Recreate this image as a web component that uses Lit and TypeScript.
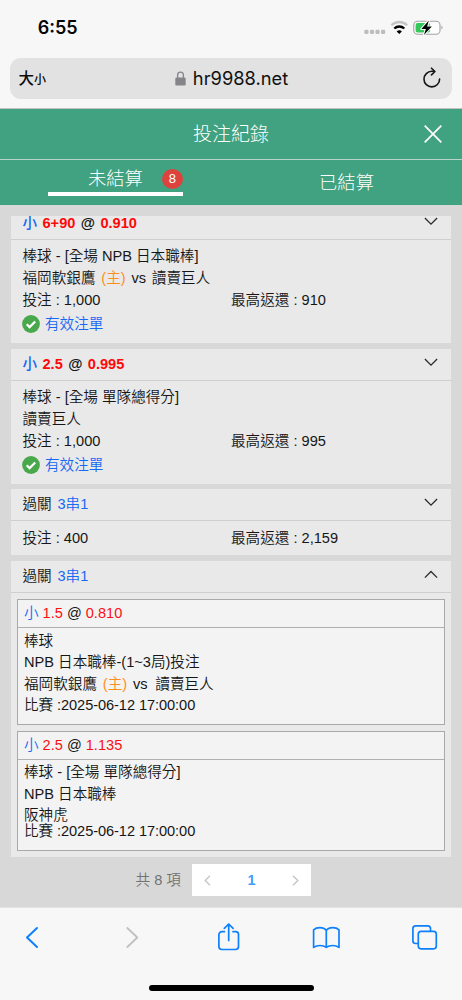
import { LitElement, html, css, svg, nothing } from "lit";
import { customElement, property } from "lit/decorators.js";

type Tone = "blue" | "red" | "orange" | "plain";
interface Part { text: string; tone?: Tone; }
interface Leg { pick: string; line: string; odds: string; rows: Part[][]; tight?: boolean; }
interface Bet {
  kind: "single" | "parlay";
  head: Part[];
  rows?: Part[][];
  stake?: string;
  payout?: string;
  valid?: boolean;
  open?: boolean;
  legs?: Leg[];
}

const match: Part[] = [
  { text: "福岡軟銀鷹" }, { text: "(主)", tone: "orange" }, { text: "vs" }, { text: "讀賣巨人" },
];

const bets: Bet[] = [
  {
    kind: "single",
    head: [{ text: "小", tone: "blue" }, { text: "6+90", tone: "red" }, { text: "@" }, { text: "0.910", tone: "red" }],
    rows: [[{ text: "棒球 - [全場 NPB 日本職棒]" }], match],
    stake: "1,000", payout: "910", valid: true,
  },
  {
    kind: "single",
    head: [{ text: "小", tone: "blue" }, { text: "2.5", tone: "red" }, { text: "@" }, { text: "0.995", tone: "red" }],
    rows: [[{ text: "棒球 - [全場 單隊總得分]" }], [{ text: "讀賣巨人" }]],
    stake: "1,000", payout: "995", valid: true,
  },
  {
    kind: "parlay",
    head: [{ text: "過關" }, { text: "3串1", tone: "blue" }],
    stake: "400", payout: "2,159",
  },
  {
    kind: "parlay", open: true,
    head: [{ text: "過關" }, { text: "3串1", tone: "blue" }],
    legs: [
      {
        pick: "小", line: "1.5", odds: "0.810",
        rows: [[{ text: "棒球" }], [{ text: "NPB 日本職棒-(1~3局)投注" }], match, [{ text: "比賽 :2025-06-12 17:00:00" }]],
      },
      {
        pick: "小", line: "2.5", odds: "1.135", tight: true,
        rows: [[{ text: "棒球 - [全場 單隊總得分]" }], [{ text: "NPB 日本職棒" }], [{ text: "阪神虎" }], [{ text: "比賽 :2025-06-12 17:00:00" }]],
      },
    ],
  },
];

const parts = (list: Part[]) =>
  list.map((p) => html`<span class="part ${p.tone ?? "plain"}">${p.text}</span>`);

@customElement("status-bar")
class StatusBar extends LitElement {
  static styles = css`
    :host { display: flex; height: 58px; box-sizing: border-box; padding: 17px 17px 0 37.8px; justify-content: space-between; align-items: flex-start; }
    .time { font: 600 18px/22px Inter, sans-serif; color: #050505; }
    .icons { display: block; }
  `;
  render() {
    return html`
      <span class="time">6:55</span>
      <svg class="icons" width="82" height="22" viewBox="363 17 82 22">
        <g fill="#bdbdbd">
          <rect x="364.3" y="29.8" width="4.2" height="4.2" rx="1.3" /><rect x="369.9" y="29.8" width="4.2" height="4.2" rx="1.3" />
          <rect x="375.4" y="29.8" width="4.2" height="4.2" rx="1.3" /><rect x="381" y="29.8" width="4.2" height="4.2" rx="1.3" />
        </g>
        <g fill="none" stroke-width="2.3">
          <path d="M391.4 25.2a11.3 11.3 0 0 1 15.8 0" stroke="#c4c4c4" />
          <path d="M394.3 28.5a7.2 7.2 0 0 1 10 0" stroke="#000" />
        </g>
        <path d="M399.3 34.1l-2.6-2.7a3.8 3.8 0 0 1 5.2 0z" />
        <rect x="413.8" y="21.2" width="26.2" height="13" rx="3.8" fill="#fdfdfd" stroke="#a3a3a3" stroke-width="1.1" />
        <path d="M441.4 25.8v3.6c.8-.3 1.2-1 1.2-1.8s-.4-1.5-1.2-1.8z" fill="#a3a3a3" />
        <rect x="415.6" y="23" width="14.5" height="9.4" rx="2" fill="#34c759" />
        <path d="M428.9 20.4l-7.6 8.5h4.6l-2 6 7.9-8.5h-4.7z" stroke="#fff" stroke-width="2" stroke-linejoin="round" />
        <path d="M428.9 20.4l-7.6 8.5h4.6l-2 6 7.9-8.5h-4.7z" />
      </svg>`;
  }
}

@customElement("address-bar")
class AddressBar extends LitElement {
  static styles = css`
    :host { display: block; height: 51px; padding: 0 10px; border-bottom: 1px solid #c3c3c3; box-sizing: border-box; }
    .field { height: 40.5px; border-radius: 11px; background: #e2e2e3; display: grid; grid-template-columns: 60px 1fr 60px; align-items: center; }
    .size { padding-left: 8.5px; display: flex; align-items: baseline; color: #0b0b0b; font-family: "Noto Sans CJK TC", sans-serif; font-weight: 500; line-height: 20px; }
    .big { font-size: 15.5px; }
    .small { font-size: 12px; }
    .site { display: flex; align-items: center; justify-content: center; gap: 7px; padding-left: 1px; }
    .url { font: 400 18.3px/24px Inter, sans-serif; color: #101010; margin-top: -1px; }
    .reload { justify-self: end; margin-right: 10.5px; margin-top: -1px; }
  `;
  render() {
    return html`
      <div class="field">
        <div class="size"><span class="big">大</span><span class="small">小</span></div>
        <div class="site">
          <svg width="11" height="15" viewBox="0 0 11 15">
            <path d="M2.6 7V4a2.9 2.9 0 0 1 5.8 0v3" fill="none" stroke="#858589" stroke-width="1.3" />
            <rect x=".3" y="6.4" width="10.4" height="8.2" rx="1.4" fill="#858589" />
          </svg>
          <span class="url">hr9988.net</span>
        </div>
        <svg class="reload" width="20" height="22" viewBox="0 0 20 22" fill="none" stroke="#161616" stroke-width="1.6" stroke-linecap="round" stroke-linejoin="round">
          <path d="M17.6 12a7.8 7.8 0 1 1-7.8-7.7h2.4" /><path d="M9.5 1.2l3.4 3.3-3.4 3.4" />
        </svg>
      </div>`;
  }
}

@customElement("record-header")
class RecordHeader extends LitElement {
  static styles = css`
    :host { display: block; background: #40a280; color: #fff; font-family: "Noto Sans CJK TC", sans-serif; font-weight: 300; }
    .title { height: 50px; display: grid; grid-template-columns: 60px 1fr 60px; align-items: center; border-bottom: 1px solid #b9d4c9; }
    .name { grid-column: 2; text-align: center; font-size: 19px; line-height: 28px; margin-top: -2px; }
    .close { justify-self: end; margin-right: 20px; }
    .tabs { height: 45px; display: grid; grid-template-columns: 1fr 1fr; }
    .tab { display: flex; justify-content: center; font-size: 18.3px; line-height: 26px; }
    .active { box-sizing: border-box; width: 135px; height: 32px; margin: 4px 0 0 48px; padding-left: 40px; justify-content: flex-start; gap: 19px; border-bottom: 4px solid #fff; }
    .idle { padding-top: 8px; }
    .badge { width: 21px; height: 20px; margin-top: 5px; border-radius: 50%; background: #dd433c; font: 400 13px/20px "Liberation Sans", sans-serif; text-align: center; }
  `;
  render() {
    return html`
      <div class="title">
        <span class="name">投注紀錄</span>
        <svg class="close" width="18" height="18" viewBox="0 0 18 18" stroke="#fff" stroke-width="1.7"><path d="M.7.7l16.6 16.6M17.3.7L.7 17.3" /></svg>
      </div>
      <div class="tabs">
        <div class="tab active"><span>未結算</span><span class="badge">8</span></div>
        <div class="tab idle">已結算</div>
      </div>`;
  }
}

const textStyles = css`
  .part { white-space: pre; }
  .part + .part { margin-left: 5.8px; }
  .plain { color: #161616; }
  .blue { color: #1768f5; }
  .red { color: #fb1010; }
  .orange { color: #ff8f1c; }
  .row { display: flex; height: 22px; line-height: 22px; }
`;

@customElement("parlay-leg")
class ParlayLeg extends LitElement {
  @property({ attribute: false }) leg!: Leg;
  static styles = [textStyles, css`
    :host { display: block; border: 1px solid #a9a9a9; background: #f3f3f3; }
    .head { height: 27px; display: flex; line-height: 27px; padding-left: 6px; border-bottom: 1px solid #b0b0b0; }
    .head .part + .part { margin-left: 4px; }
    .body { box-sizing: border-box; padding: 3px 0 0 6px; height: 96px; }
    .row { height: 21.4px; line-height: 21.4px; }
    .row .part:nth-child(4) { margin-left: 7.8px; }
    .row:last-child { letter-spacing: -0.07px; }
    .tight { height: 90px; padding-top: 2.4px; }
    .tight .row:last-child { margin-top: -6px; }
  `];
  render() {
    const l = this.leg;
    return html`
      <div class="head">${parts([{ text: l.pick, tone: "blue" }, { text: l.line, tone: "red" }, { text: "@" }, { text: l.odds, tone: "red" }])}</div>
      <div class="body ${l.tight ? "tight" : ""}">${l.rows.map((r) => html`<div class="row">${parts(r)}</div>`)}</div>`;
  }
}

@customElement("bet-card")
class BetCard extends LitElement {
  @property({ attribute: false }) bet!: Bet;
  static styles = [textStyles, css`
    :host { display: block; background: #e9e9e9; }
    .head { height: 31px; line-height: 15px; display: flex; align-items: center; padding: 0 12px 0 11.5px; border-bottom: 1px solid #cfcfcf; }
    .single { font-weight: 700; }
    .single .red { color: #ff0808; }
    .single .blue { font-weight: 500; }
    .single .part + .part { margin-left: 5.4px; }
    .chevron { margin: -4px 1px 0 auto; }
    .body { height: 103px; box-sizing: border-box; padding: 5.5px 12px 0 11.5px; }
    .short { height: 34px; }
    .money { display: grid; grid-template-columns: 208.5px 1fr; }
    .valid { height: 26px; line-height: 26px; gap: 5px; align-items: center; }
    .valid svg { margin-left: -0.5px; }
    .legs { display: flex; flex-direction: column; gap: 6px; padding: 6px; }
  `];
  render() {
    const b = this.bet;
    return html`
      <div class="head ${b.kind}">
        ${parts(b.head)}
        <svg class="chevron" width="14" height="9" viewBox="0 0 14 9" fill="none" stroke="#2a2a2a" stroke-width="1.3">
          ${b.open ? svg`<path d="M.9 7.6L7 1.5l6.1 6.1" />` : svg`<path d="M.9 1L7 7.1 13.1 1" />`}
        </svg>
      </div>
      ${b.stake ? html`
        <div class="body ${b.rows ? "" : "short"}">
          ${b.rows?.map((r) => html`<div class="row">${parts(r)}</div>`)}
          <div class="row money"><span class="plain">投注 : ${b.stake}</span><span class="plain">最高返還 : ${b.payout}</span></div>
          ${b.valid ? html`<div class="row valid">
            <svg width="18" height="18" viewBox="0 0 18 18"><circle cx="9" cy="9" r="8.9" fill="#49a84c" /><path d="M4.7 9.2l2.9 2.9 5.6-5.7" fill="none" stroke="#fff" stroke-width="2.2" /></svg>
            <span class="blue">有效注單</span></div>` : nothing}
        </div>` : nothing}
      ${b.legs ? html`<div class="legs">${b.legs.map((l) => html`<parlay-leg .leg=${l}></parlay-leg>`)}</div>` : nothing}`;
  }
}

@customElement("page-picker")
class PagePicker extends LitElement {
  static styles = css`
    :host { display: flex; align-items: center; height: 32px; margin: 7px 0 0 136px; }
    .total { width: 56.5px; color: #727272; font-size: 14.6px; }
    .box { box-sizing: border-box; width: 119px; height: 32px; background: #fff; display: flex; justify-content: space-between; align-items: center; padding: 0 12px; }
    .current { color: #409eff; font: 700 14.5px/32px "Liberation Sans", sans-serif; }
  `;
  render() {
    return html`
      <span class="total">共 8 項</span>
      <div class="box">
        <svg width="7" height="11" viewBox="0 0 7 11" fill="none" stroke="#c3c6cc" stroke-width="1.4"><path d="M6 .7L1.2 5.5 6 10.3" /></svg>
        <span class="current">1</span>
        <svg width="7" height="11" viewBox="0 0 7 11" fill="none" stroke="#c3c6cc" stroke-width="1.4"><path d="M1 .7l4.8 4.8L1 10.3" /></svg>
      </div>`;
  }
}

@customElement("browser-toolbar")
class BrowserToolbar extends LitElement {
  static styles = css`
    :host { display: flex; flex-direction: column; align-items: center; height: 93px; background: #f7f7f7; box-sizing: border-box; border-top: 1px solid #e3e3e3; }
    .bar { display: block; }
    .home { width: 165px; height: 6px; border-radius: 3px; background: #000; margin-top: 17px; }
  `;
  render() {
    return html`
      <svg class="bar" width="462" height="60" viewBox="0 908 462 60" fill="none" stroke="#0f80fb" stroke-width="1.7" stroke-linecap="round" stroke-linejoin="round">
        <path d="M37 928l-10 9.5 10 9.5" stroke-width="2" />
        <path d="M127.3 928l10 9.5-10 9.5" stroke="#c0c0c0" stroke-width="1.8" />
        <path d="M224.4 931.7h-2.6a2.900 2.900 0 0 0-2.900 2.900v12a2.900 2.900 0 0 0 2.900 2.900h13.800a2.900 2.900 0 0 0 2.900-2.900v-12a2.900 2.900 0 0 0-2.900-2.900H233M228.700 940.500v-16M224.300 928.400l4.400-4.400 4.400 4.400" />
        <path d="M326.300 930.300v17M326.300 930.300c-1.500-1.800-3.800-2.600-6.400-2.600-2.600 0-4.900.8-6.300 2.200v17.500c1.700-1.200 3.900-1.900 6.300-1.900 2.500 0 4.800.6 6.400 1.900 1.600-1.300 3.900-1.900 6.400-1.900 2.400 0 4.600.7 6.300 1.900v-17.500c-1.400-1.400-3.700-2.200-6.300-2.200-2.600 0-4.900.8-6.400 2.600z" />
        <rect x="418.300" y="931.300" width="18" height="17.500" rx="2.700" />
        <path d="M417.900 943.500h-2.300a2.700 2.700 0 0 1-2.700-2.700v-12.300a2.700 2.700 0 0 1 2.700-2.700h12.200a2.700 2.700 0 0 1 2.700 2.700v2.400" />
      </svg>
      <div class="home"></div>`;
  }
}

@customElement("app-root")
class AppRoot extends LitElement {
  static styles = css`
    :host { display: flex; flex-direction: column; width: 462px; height: 1000px; overflow: hidden; background: #f7f7f7; }
    .content { height: 703px; box-sizing: border-box; padding: 12px 11px 0; margin-top: -1px; background: #d8d8d8; font: 350 14.6px/22px "Liberation Sans", "Noto Sans CJK TC", sans-serif; }
    record-header { position: relative; z-index: 1; }
    .list { height: 641px; overflow: hidden; display: flex; flex-direction: column; justify-content: flex-end; gap: 5.7px; }
    .list bet-card { flex: none; }
    page-picker { margin-left: 124.5px; }
  `;
  render() {
    return html`
      <status-bar></status-bar>
      <address-bar></address-bar>
      <record-header></record-header>
      <main class="content">
        <div class="list">${bets.map((b) => html`<bet-card .bet=${b}></bet-card>`)}</div>
        <page-picker></page-picker>
      </main>
      <browser-toolbar></browser-toolbar>`;
  }
}
